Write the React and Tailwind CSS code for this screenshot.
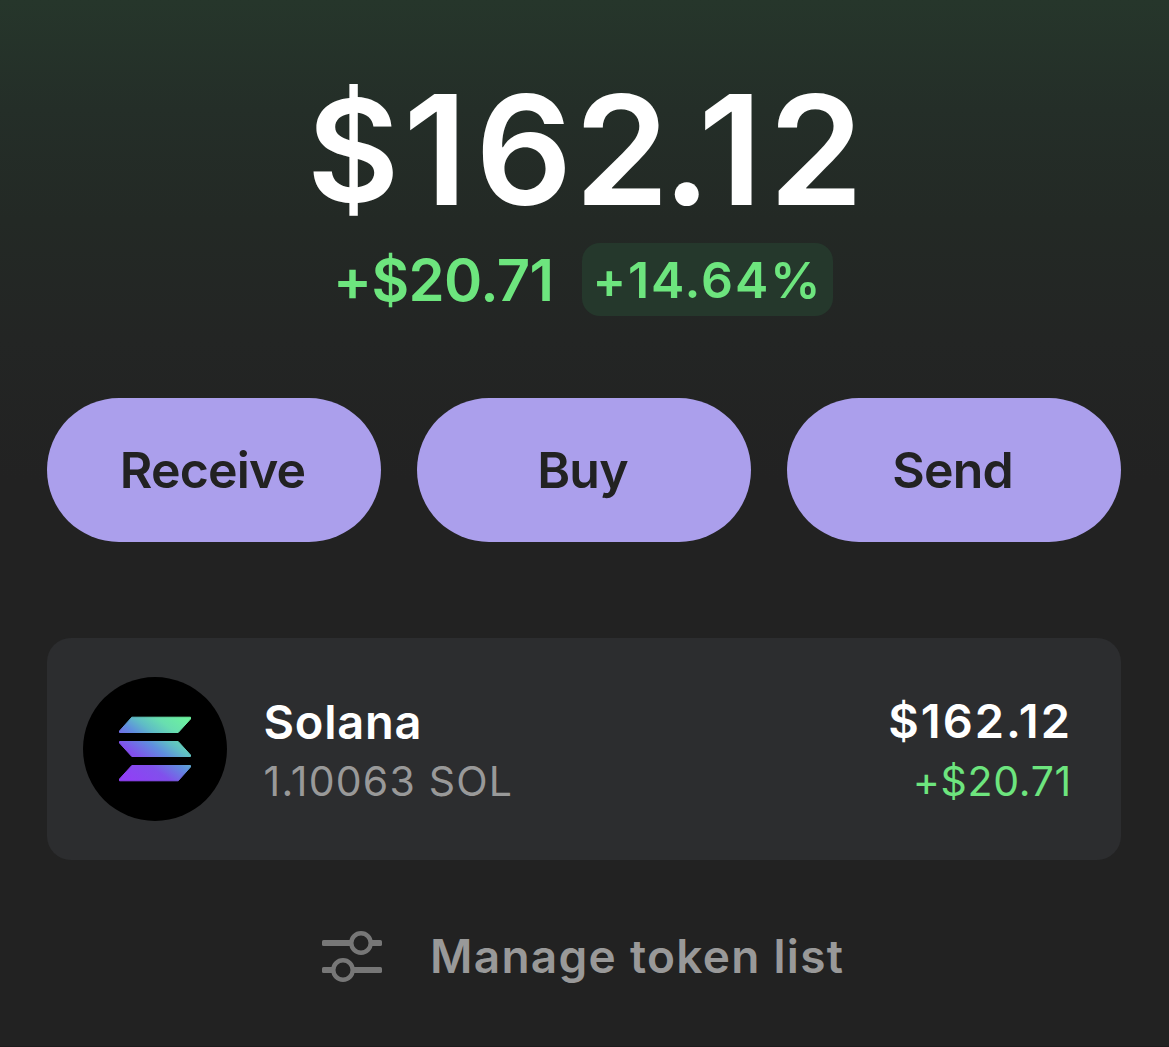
import React from "react";

const actions = ["Receive", "Buy", "Send"];

function SolanaLogo() {
  return (
    <svg className="block size-[144px] shrink-0" viewBox="0 0 144 144" aria-hidden="true">
      <defs>
        <linearGradient id="sol" gradientUnits="userSpaceOnUse" x1="46" y1="112" x2="102" y2="36">
          <stop offset="0.08" stopColor="#9040f5" />
          <stop offset="0.33" stopColor="#8150ec" />
          <stop offset="0.52" stopColor="#5f8ede" />
          <stop offset="0.64" stopColor="#5fbcc6" />
          <stop offset="0.78" stopColor="#68deb0" />
          <stop offset="0.97" stopColor="#6cf29e" />
        </linearGradient>
      </defs>
      <circle cx="72" cy="72" r="72" fill="#000" />
      <g fill="url(#sol)" stroke="url(#sol)" strokeWidth="1" strokeLinejoin="round">
        <path d="M48.8 40.2H107.5V42L95.2 55.5H36.5V54Z" />
        <path d="M36.5 64.5H95.2L107.5 78V79.5H48.8L36.5 66Z" />
        <path d="M48.8 88.5H107.5V90L95.2 103.8H36.5V102Z" />
      </g>
    </svg>
  );
}

function SlidersIcon() {
  return (
    <svg className="block h-[52px] w-[60px] shrink-0" viewBox="0 0 60 52" fill="none" aria-hidden="true">
      <g fill="#777777">
        <rect x="0" y="10" width="30" height="6" rx="1.6" />
        <rect x="48" y="10" width="12" height="6" rx="1.6" />
        <rect x="0" y="37" width="12" height="6" rx="1.6" />
        <rect x="30" y="37" width="30" height="6" rx="1.6" />
      </g>
      <circle cx="39" cy="13" r="9.7" fill="#222222" stroke="#777777" strokeWidth="4.4" />
      <circle cx="21" cy="40" r="9.7" fill="#222222" stroke="#777777" strokeWidth="4.4" />
    </svg>
  );
}

export default function App() {
  return (
    <main className="flex h-[1047px] w-[1169px] flex-col overflow-hidden border-b border-[#1d1b1c] bg-[#222222] bg-linear-[180deg,#26362b_0px,#242e28_110px,#232925_220px,#232524_340px,#222222_480px] pl-[47px] pr-[48px] pt-[75px] font-['Inter',sans-serif]">
      <h1 className="flex h-[151px] items-center pl-[260px] whitespace-nowrap text-[152px] leading-[151px] font-semibold text-white">
        <span className="text-[142px] leading-[151px] tracking-[4px]">$</span>
        <span className="tracking-[7.6px]">1</span>
        <span className="tracking-[2px]">6</span>
        <span className="tracking-[-6.6px]">2</span>
        <span className="tracking-[-12.7px]">.</span>
        <span className="tracking-[6px]">1</span>
        <span>2</span>
      </h1>

      <div className="mt-[17px] flex h-[73px] items-center pl-[286px] whitespace-nowrap text-[#6de57e]">
        <span className="w-[249px] pt-[2px] text-[58px] leading-[75px] font-semibold tracking-[-0.6px]">+$20.71</span>
        <span className="h-[73px] w-[251px] rounded-[18px] bg-[#25382c] pl-[10.5px] text-[50px] leading-[74px] font-semibold tracking-[1.9px]">
          +14.64%
        </span>
      </div>

      <div className="mt-[82px] grid grid-cols-3 gap-[36px]">
        {actions.map((label) => (
          <button
            key={label}
            className="h-[144px] rounded-full bg-[#ab9fec] pr-[3px] text-[50px] leading-[60px] font-semibold tracking-[-0.85px] text-[#222222]"
          >
            {label}
          </button>
        ))}
      </div>

      <section className="mt-[96px] flex h-[222px] items-center rounded-[24px] bg-[#2c2d2f] pr-[49px] pl-[36px]">
        <SolanaLogo />
        <div className="ml-[36.5px] flex flex-1 justify-between pt-[4px] whitespace-nowrap">
          <div>
            <div className="text-[47px] leading-[60px] font-semibold tracking-[0.75px] text-white">Solana</div>
            <div className="text-[41px] leading-[59px] tracking-[1.2px] text-[#999999]">1.10063 SOL</div>
          </div>
          <div className="text-right">
            <div className="h-[60px] text-[47px] leading-[58px] font-semibold tracking-[2px] text-white">$162.12</div>
            <div className="text-[41px] leading-[59px] tracking-[0.7px] text-[#6de57e]">+$20.71</div>
          </div>
        </div>
      </section>

      <button className="mt-[66px] flex h-[60px] items-center pl-[275px] whitespace-nowrap">
        <SlidersIcon />
        <span className="ml-[48px] text-[46px] leading-[60px] font-semibold tracking-[1.28px] text-[#999999]">
          Manage token list
        </span>
      </button>
    </main>
  );
}
